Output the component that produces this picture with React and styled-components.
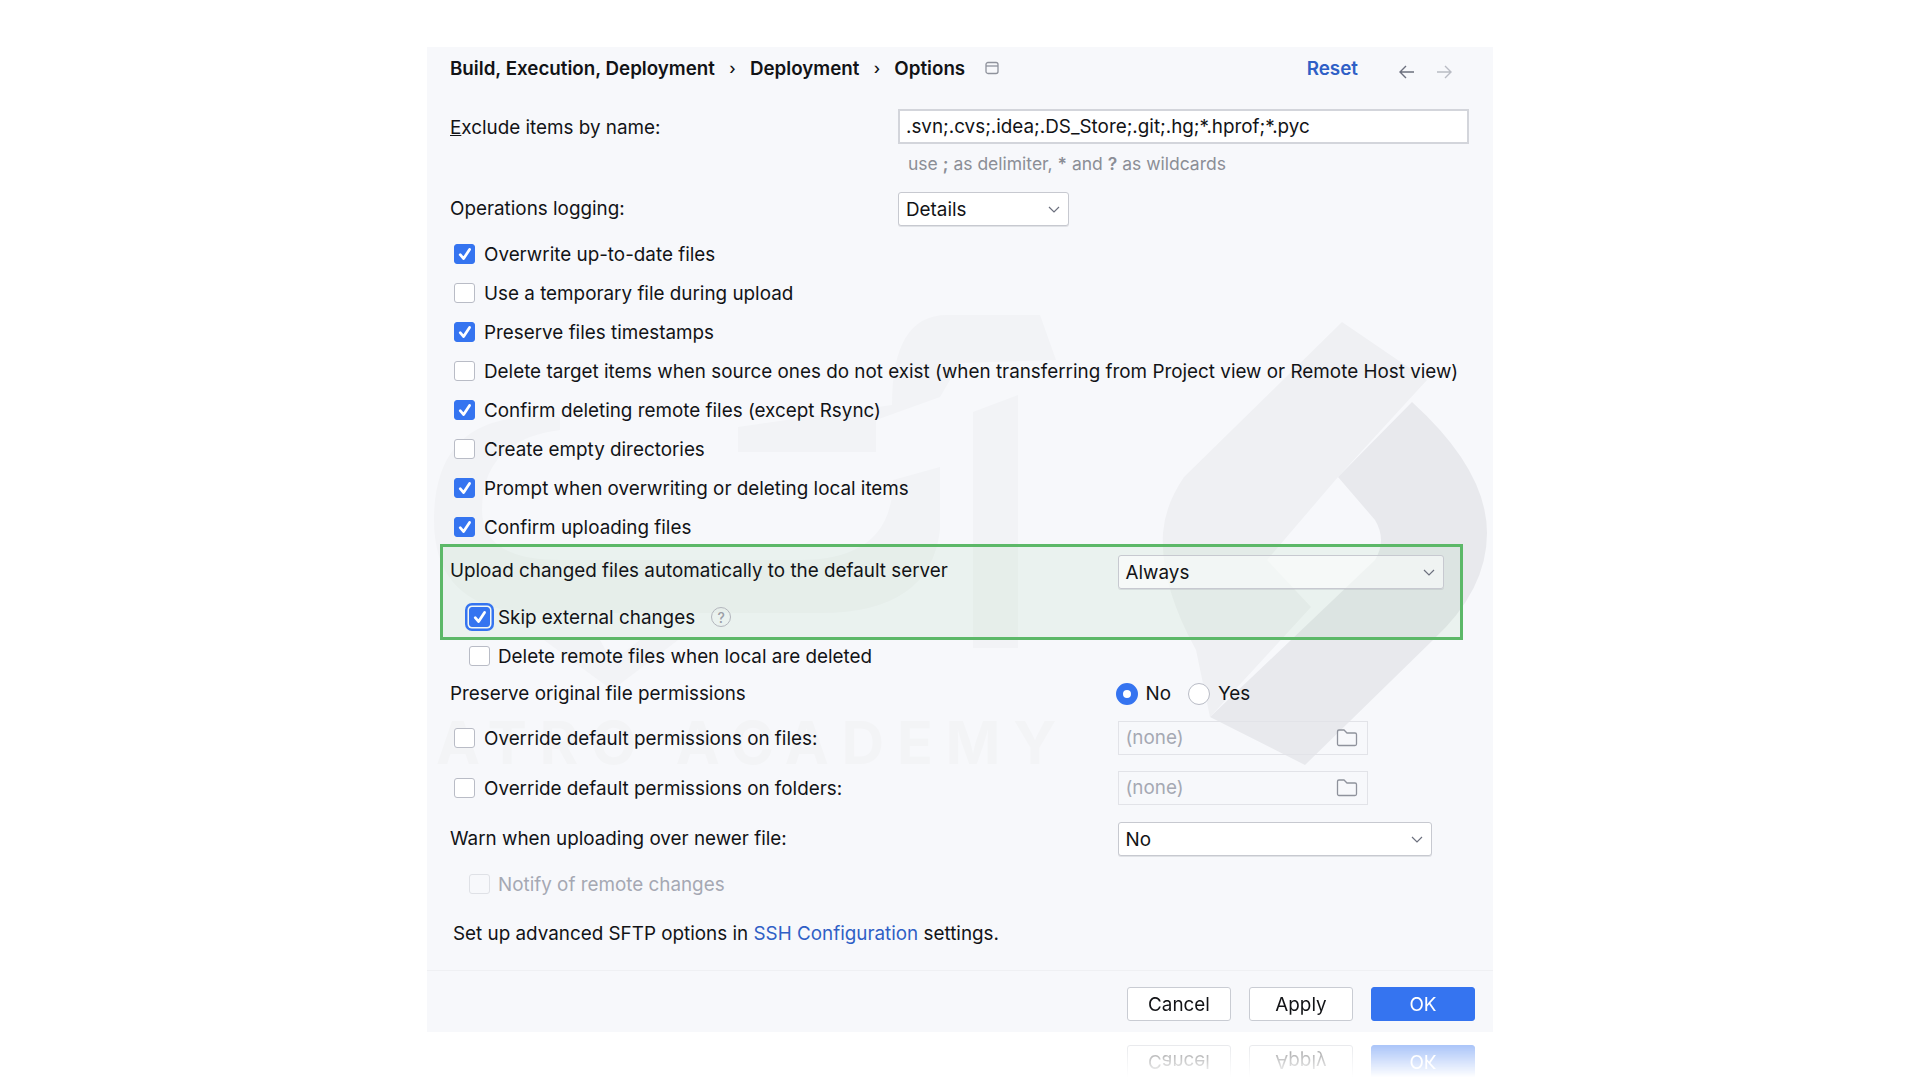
import React from 'react';
import styled, { createGlobalStyle } from 'styled-components';

const Global = createGlobalStyle`
  html, body { margin: 0; padding: 0; background: #fff; height: 1080px; overflow: hidden; }
  body { font-family: Inter, "Noto Sans", "Liberation Sans", sans-serif; color: #121316; }
`;

const Dialog = styled.div`
  position: relative;
  box-sizing: border-box;
  width: 1066px;
  height: 985px;
  margin: 47px auto 0;
  padding: 0 23px;
  background: #f7f8fb;
  font-size: 18.85px;
`;

const WatermarkArt = styled.svg`
  position: absolute;
  inset: 0;
  width: 100%;
  height: 100%;
`;

const WatermarkText = styled.span`
  position: absolute;
  left: 9px;
  top: 661px;
  font-size: 59px;
  line-height: 70px;
  font-weight: 700;
  letter-spacing: 12.7px;
  white-space: nowrap;
  color: #f3f4f6;
`;

const Content = styled.div`
  position: relative;
  z-index: 1;
  display: flex;
  flex-direction: column;
`;

const Header = styled.div`
  display: flex;
  align-items: center;
  height: 42px;
  padding-right: 16px;
`;

const Crumb = styled.span`
  font-size: 18.75px;
  font-weight: 600;
  white-space: nowrap;
`;

const CrumbSep = styled.span`
  width: 35px;
  text-align: center;
  font-size: 16px;
  font-weight: 500;
`;

const SectionIcon = styled.svg`
  width: 14px;
  height: 14px;
  margin-left: 20px;
  fill: none;
  stroke: #8f929c;
  stroke-width: 1.3;
`;

const ResetLink = styled.span`
  margin-left: auto;
  margin-right: 39px;
  font-weight: 600;
  color: #2f5fc6;
`;

const NavArrow = styled.svg`
  width: 20px;
  height: 20px;
  margin-top: 8px;
  margin-right: ${(p) => p.$gap || 0}px;
  fill: none;
  stroke: ${(p) => (p.$dim ? '#b9bcc4' : '#6c707e')};
  stroke-width: 1.4;
`;

const FormRow = styled.div`
  display: grid;
  grid-template-columns: ${(p) => p.$label}px auto;
  justify-content: start;
  align-items: center;
  margin-top: ${(p) => p.$top || 0}px;
`;

const Label = styled.span`
  white-space: nowrap;
  margin-top: ${(p) => p.$shift || 0}px;
`;

const TextInput = styled.div`
  box-sizing: border-box;
  display: flex;
  align-items: center;
  width: ${(p) => p.$width}px;
  height: 35px;
  padding: 0 6px 1px;
  background: #fff;
  border: 2px solid #d3d5db;
  white-space: nowrap;
`;

const Hint = styled.div`
  margin: 10px 0 0 458px;
  height: 20px;
  line-height: 20px;
  font-size: 17.5px;
  color: #8b8e96;
`;

const HintMark = styled.b`
  font-weight: 600;
`;

const Combo = styled.div`
  box-sizing: border-box;
  display: flex;
  align-items: center;
  justify-content: space-between;
  width: ${(p) => p.$width}px;
  height: 34px;
  padding: 0 7px;
  background: ${(p) => (p.$tinted ? 'rgba(255,255,255,.55)' : '#fff')};
  border: 1.5px solid #c7c9d0;
  border-radius: 3px;
  box-shadow: 0 1px 0 rgba(120, 125, 140, .18);
`;

const ComboChevron = styled.svg`
  width: 14px;
  height: 14px;
  fill: none;
  stroke: #6c707e;
  stroke-width: 1.2;
`;

const CheckList = styled.div`
  display: flex;
  flex-direction: column;
  gap: 19px;
  margin-top: 18px;
`;

const CheckRow = styled.div`
  display: flex;
  align-items: center;
  height: 20px;
  padding-left: ${(p) => p.$indent || 4}px;
  margin-top: ${(p) => p.$top || 0}px;
  color: ${(p) => (p.$disabled ? '#a5a8b3' : 'inherit')};
  white-space: nowrap;
`;

const Box = styled.span`
  box-sizing: border-box;
  flex: none;
  display: flex;
  align-items: center;
  justify-content: center;
  width: 21px;
  height: 20px;
  margin-right: ${(p) => p.$gap || 9}px;
  border-radius: 3px;
  background: ${(p) => (p.$checked ? '#3574f0' : p.$disabled ? 'transparent' : '#fff')};
  border: 1.5px solid ${(p) => (p.$checked ? '#3574f0' : p.$disabled ? '#dfe1e6' : '#b9bcc6')};
  box-shadow: ${(p) => (p.$focused ? '0 0 0 1.5px #f3f8f5, 0 0 0 4px #3574f0' : 'none')};
`;

const CheckMark = styled.svg`
  width: 16px;
  height: 16px;
  fill: none;
  stroke: #fff;
  stroke-width: 2.4;
  stroke-linecap: round;
  stroke-linejoin: round;
`;

const HelpBadge = styled.span`
  box-sizing: border-box;
  display: flex;
  align-items: center;
  justify-content: center;
  width: 20px;
  height: 20px;
  margin-left: 16px;
  border: 1.5px solid #b3b6bd;
  border-radius: 50%;
  font-size: 14px;
  font-weight: 500;
  color: #9b9ea6;
`;

const Highlight = styled.div`
  box-sizing: border-box;
  width: 1023px;
  height: 96px;
  margin: 7px 0 0 -10px;
  padding: 8px 0 0 7px;
  border: 3px solid #5cb868;
  background: rgba(92, 184, 104, .08);
`;

const RadioGroup = styled.div`
  display: flex;
  align-items: center;
  margin-left: -2px;
`;

const Radio = styled.span`
  box-sizing: border-box;
  width: 22px;
  height: 22px;
  margin-right: 8px;
  border-radius: 50%;
  background: #fff;
  border: ${(p) => (p.$on ? '7px solid #3574f0' : '1.5px solid #b9bcc6')};
`;

const RadioText = styled.span`
  margin-right: ${(p) => p.$gap || 0}px;
`;

const PathField = styled.div`
  box-sizing: border-box;
  display: flex;
  align-items: center;
  justify-content: space-between;
  width: 250px;
  height: 34px;
  padding: 0 9px 0 7px;
  border: 1.5px solid #e2e3e8;
  color: #a5a8b3;
`;

const PathValue = styled.span`
  margin-top: -2px;
`;

const FolderIcon = styled.svg`
  width: 22px;
  height: 20px;
  fill: none;
  stroke: #8f929c;
  stroke-width: 1.3;
`;

const Footnote = styled.div`
  height: 20px;
  line-height: 20px;
  margin-top: 30px;
  padding-left: 3px;
`;

const Link = styled.span`
  color: #2f5fc6;
`;

const Separator = styled.div`
  height: 1px;
  margin: 26px -23px 0;
  background: #eff0f3;
`;

const Footer = styled.div`
  display: flex;
  justify-content: flex-end;
  gap: 18px;
  margin: 16px -5px 0 0;
  -webkit-box-reflect: below 24px linear-gradient(transparent 5%, rgba(255, 255, 255, .42));
`;

const Button = styled.div`
  box-sizing: border-box;
  display: flex;
  align-items: center;
  justify-content: center;
  width: 104px;
  height: 34px;
  border-radius: 3px;
  background: ${(p) => (p.$primary ? '#3574f0' : '#fff')};
  color: ${(p) => (p.$primary ? '#fff' : 'inherit')};
  border: 1.5px solid ${(p) => (p.$primary ? '#3574f0' : '#c9ccd3')};
`;

const Check = ({ checked, disabled, focused, gap, indent, top, children, extra }) => (
  <CheckRow $indent={indent} $top={top} $disabled={disabled}>
    <Box $checked={checked} $disabled={disabled} $focused={focused} $gap={gap}>
      {checked && (
        <CheckMark viewBox="0 0 14 14">
          <path d="M2.8 7.6 L5.8 11 L11 3" />
        </CheckMark>
      )}
    </Box>
    {children}
    {extra}
  </CheckRow>
);

const Chevron = () => (
  <ComboChevron viewBox="0 0 14 14">
    <path d="M2 5 L7 10 L12 5" />
  </ComboChevron>
);

const Folder = () => (
  <FolderIcon viewBox="0 0 22 20">
    <path d="M1.5 3.5 a1.5 1.5 0 0 1 1.5 -1.5 h5 l3 3 h8 a1.5 1.5 0 0 1 1.5 1.5 v9.5 a1.5 1.5 0 0 1 -1.5 1.5 h-16 a1.5 1.5 0 0 1 -1.5 -1.5 z" />
  </FolderIcon>
);

const options = [
  ['Overwrite up-to-date files', true],
  ['Use a temporary file during upload', false],
  ['Preserve files timestamps', true],
  ['Delete target items when source ones do not exist (when transferring from Project view or Remote Host view)', false],
  ['Confirm deleting remote files (except Rsync)', true],
  ['Create empty directories', false],
  ['Prompt when overwriting or deleting local items', true],
  ['Confirm uploading files', true],
];

export default function App() {
  return (
    <>
      <Global />
      <Dialog>
        <WatermarkArt viewBox="427 47 1066 985">
          <g fill="#f2f3f6">
            <path d="M434 520 Q434 420 530 417 L560 417 L560 430 Q482 440 482 510 Q482 560 560 560 L800 560 Q893 560 893 480 L940 467 L940 530 Q930 613 820 613 L540 613 Q434 613 434 520 Z" />
            <path d="M738 427 L892 405 Q892 315 947 315 L1040 315 L1056 360 L960 363 L940 397 L876 420 L876 452 L738 452 Z" />
            <path d="M973 412 L1018 395 L1018 648 L973 648 Z" />
            <path d="M544 640 L600 640 L612 662 L640 640 L678 640 L612 690 Z" />
          </g>
          <path fill="#eff0f3" d="M1342 322 L1427 380 L1338 477 L1267 560 L1311 607 L1210 717 L1196 650 Q1160 585 1163 533 Q1165 505 1184 477 Z" />
          <path fill="#e8e9ed" d="M1412 402 Q1487 470 1487 533 Q1487 590 1433 640 L1305 765 L1210 717 L1375 560 Q1387 540 1375 520 L1338 477 Z" />
        </WatermarkArt>
        <WatermarkText>ATRO ACADEMY</WatermarkText>
        <Content>
          <Header>
            <Crumb>Build, Execution, Deployment</Crumb>
            <CrumbSep>›</CrumbSep>
            <Crumb>Deployment</Crumb>
            <CrumbSep>›</CrumbSep>
            <Crumb>Options</Crumb>
            <SectionIcon viewBox="0 0 14 14">
              <rect x="1" y="1.5" width="12" height="11" rx="2" />
              <path d="M1 5 H13" />
            </SectionIcon>
            <ResetLink>Reset</ResetLink>
            <NavArrow viewBox="0 0 20 20" $gap={17}>
              <path d="M17 10 H3 M9 4 L3 10 L9 16" />
            </NavArrow>
            <NavArrow viewBox="0 0 20 20" $dim>
              <path d="M3 10 H17 M11 4 L17 10 L11 16" />
            </NavArrow>
          </Header>

          <FormRow $label={448} $top={20}>
            <Label $shift={1}><u>E</u>xclude items by name:</Label>
            <TextInput $width={571}>.svn;.cvs;.idea;.DS_Store;.git;.hg;*.hprof;*.pyc</TextInput>
          </FormRow>
          <Hint>
            use <HintMark>;</HintMark> as delimiter, <HintMark>*</HintMark> and <HintMark>?</HintMark> as wildcards
          </Hint>
          <FormRow $label={448} $top={18}>
            <Label $shift={-2}>Operations logging:</Label>
            <Combo $width={171}>Details<Chevron /></Combo>
          </FormRow>

          <CheckList>
            {options.map(([text, on]) => (
              <Check key={text} checked={on}>{text}</Check>
            ))}
          </CheckList>

          <Highlight>
            <FormRow $label={667.5}>
              <Label $shift={-4}>Upload changed files automatically to the default server</Label>
              <Combo $width={326} $tinted>Always<Chevron /></Combo>
            </FormRow>
            <Check checked focused indent={19} top={18} gap={8}
              extra={<HelpBadge>?</HelpBadge>}>Skip external changes</Check>
          </Highlight>

          <Check indent={19} top={6} gap={8}>Delete remote files when local are deleted</Check>

          <FormRow $label={667.5} $top={16}>
            <Label $shift={-1}>Preserve original file permissions</Label>
            <RadioGroup>
              <Radio $on />
              <RadioText $gap={17}>No</RadioText>
              <Radio />
              <RadioText>Yes</RadioText>
            </RadioGroup>
          </FormRow>

          <FormRow $label={667.5} $top={16}>
            <Check>Override default permissions on files:</Check>
            <PathField><PathValue>(none)</PathValue><Folder /></PathField>
          </FormRow>
          <FormRow $label={667.5} $top={16}>
            <Check>Override default permissions on folders:</Check>
            <PathField><PathValue>(none)</PathValue><Folder /></PathField>
          </FormRow>
          <FormRow $label={667.5} $top={17}>
            <Label $shift={-2}>Warn when uploading over newer file:</Label>
            <Combo $width={314}>No<Chevron /></Combo>
          </FormRow>

          <Check disabled indent={19} top={18} gap={8}>Notify of remote changes</Check>

          <Footnote>
            Set up advanced SFTP options in <Link>SSH Configuration</Link> settings.
          </Footnote>

          <Separator />
          <Footer>
            <Button>Cancel</Button>
            <Button>Apply</Button>
            <Button $primary>OK</Button>
          </Footer>
        </Content>
      </Dialog>
    </>
  );
}
